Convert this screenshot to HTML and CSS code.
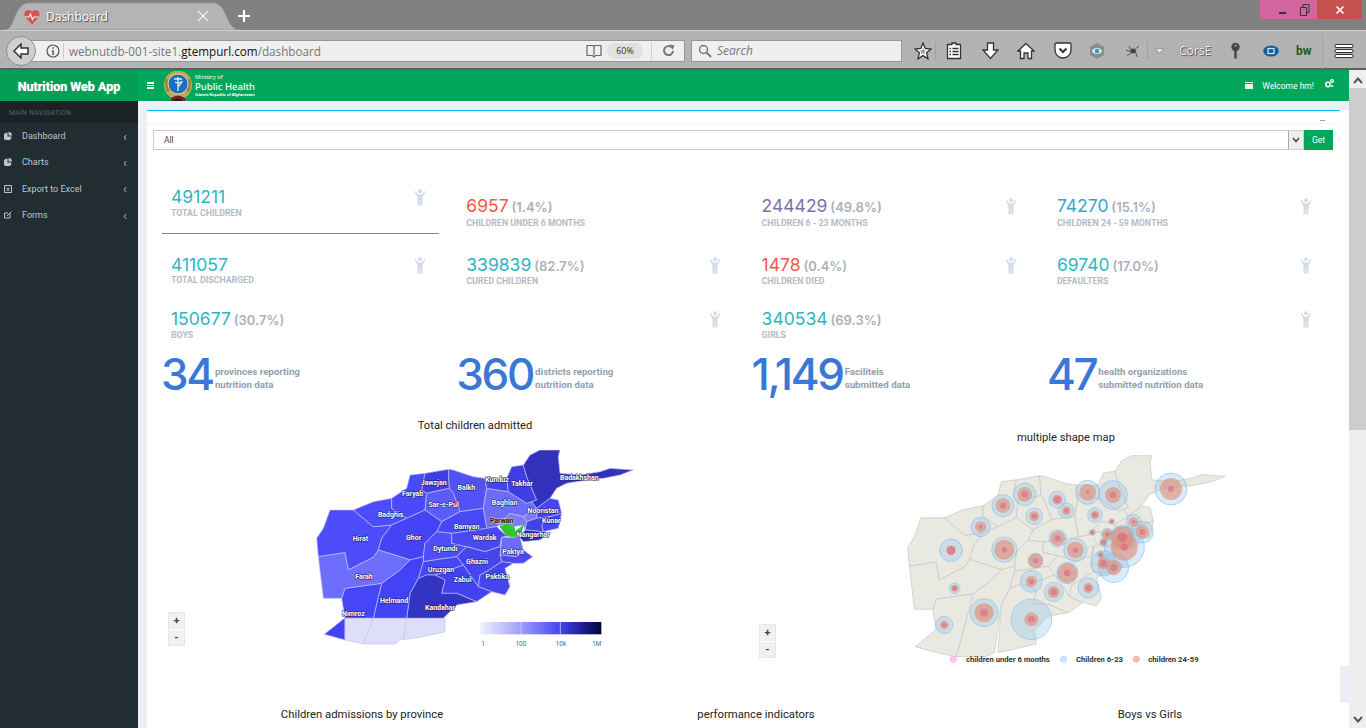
FILE: index.html
```html
<!DOCTYPE html>
<html lang="en">
<head>
<meta charset="utf-8">
<title>Dashboard</title>
<link rel="stylesheet" href="styles.css">
</head>
<body>
<div class="window">
  <div class="tabstrip">
    <div class="tab">
      <svg class="tab-shape" width="236" height="28" viewBox="0 0 236 28"><path d="M0 28C10 28 9 1 24 1H208C223 1 220 28 235 28Z" fill="#b4b4b4" stroke="#9a9a9a"/></svg>
      <svg class="tab-fav" width="16" height="16" viewBox="0 0 16 16"><path d="M8 15.5L1.2 8.2C-.6 5.6.4 1.4 4 1c1.800-.2 3.200.6 4 2 .8-1.400 2.200-2.200 4-2 3.600.4 4.600 4.600 2.800 7.200Z" fill="#d9534f"/><path d="M1 8H5L6.500 5 8.500 10.500 10 8H15" fill="none" stroke="#eee" stroke-width="1.200"/></svg>
      <span class="tab-title">Dashboard</span>
      <svg class="tab-close" width="12" height="12" viewBox="0 0 12 12"><path d="M1 1L11 11M11 1L1 11" stroke="#eee" stroke-width="1.200"/></svg>
    </div>
    <svg class="newtab" width="14" height="14" viewBox="0 0 14 14"><path d="M7 1V13M1 7H13" stroke="#fff" stroke-width="2.200"/></svg>
    <div class="winctl">
      <div class="winbtns">
        <svg width="14" height="14" viewBox="0 0 14 14"><path d="M1 10H8" stroke="#333" stroke-width="2"/></svg>
        <svg width="14" height="14" viewBox="0 0 14 14"><path d="M2.500 4.500H8.500V12.500H2.500ZM5 4V1.500H11V9.500H9" fill="none" stroke="#333"/></svg>
      </div>
      <div class="winclose">
        <svg width="10" height="10" viewBox="0 0 10 10"><path d="M1.500 1.500L8.500 8.500M8.500 1.500L1.500 8.500" stroke="#fff" stroke-width="1.600"/></svg>
      </div>
    </div>
  </div>
  <div class="toolbar">
    <div class="back">
      <svg width="18" height="16" viewBox="0 0 18 16"><path d="M9 1L2 8 9 15V11H16V5H9Z" fill="#fff" stroke="#333" stroke-width="1.500"/></svg>
    </div>
    <div class="urlbar">
      <svg class="url-info" width="14" height="14" viewBox="0 0 14 14"><circle cx="7" cy="7" r="6" fill="none" stroke="#555" stroke-width="1.200"/><path d="M7 6V11M7 3.200V4.800" stroke="#555" stroke-width="1.500"/></svg>
      <span class="url-text">webnutdb-001-site1.<b>gtempurl.com</b>/dashboard</span>
      <svg class="url-book" width="16" height="14" viewBox="0 0 16 14"><path d="M1 1.500H7L8 2.500 9 1.500H15V11.500H9.500L8 13 6.500 11.500H1ZM8 2.500V11" fill="none" stroke="#666" stroke-width="1.200"/></svg>
      <span class="url-zoom">60%</span>
      <span class="url-sep"></span>
      <svg class="url-reload" width="14" height="14" viewBox="0 0 14 14"><path d="M11 7A4.500 4.500 0 1 1 9.500 3.200" fill="none" stroke="#777" stroke-width="2"/><path d="M8 .5L12.500 1.500 10.500 6Z" fill="#777"/></svg>
    </div>
    <div class="searchbar">
      <svg width="14" height="14" viewBox="0 0 14 14"><circle cx="5.500" cy="5.500" r="4" fill="none" stroke="#777" stroke-width="1.500"/><path d="M8.500 8.500L13 13" stroke="#777" stroke-width="2"/></svg>
      <span>Search</span>
    </div>
    <div class="tools">
      <svg class="t-star" width="18" height="18" viewBox="0 0 18 18"><path d="M9 1L11.200 6.500 17 7 12.600 10.800 14 16.800 9 13.600 4 16.800 5.400 10.800 1 7 6.800 6.500Z" fill="#fff" stroke="#333" stroke-width="1.300"/><path d="M9 6L10 8.300 12.300 8.500 10.500 10.100 11 12.500 9 11.200 7 12.500 7.500 10.100 5.700 8.500 8 8.300Z" fill="#999"/></svg>
      <span class="t-sep"></span>
      <svg class="t-list" width="16" height="18" viewBox="0 0 16 18"><path d="M6 2.500V1H10V2.500H14.500V16.500H1.500V2.500Z" fill="#fff" stroke="#333" stroke-width="1.300"/><path d="M3.500 6.500H5M6.500 6.500H12.500M3.500 9.500H5M6.500 9.500H12.500M3.500 12.500H5M6.500 12.500H12.500" stroke="#333" stroke-width="1.500"/></svg>
      <svg class="t-down" width="17" height="18" viewBox="0 0 17 18"><path d="M5.500 1H11.500V8H16L8.500 16.500 1 8H5.500Z" fill="#fff" stroke="#333" stroke-width="1.300"/></svg>
      <svg class="t-home" width="18" height="18" viewBox="0 0 18 18"><path d="M9 1.500L17 9H14.500V16.500H11V11H7V16.500H3.500V9H1Z" fill="#fff" stroke="#333" stroke-width="1.300"/></svg>
      <svg class="t-pocket" width="18" height="17" viewBox="0 0 18 17"><path d="M1 2.500Q1 1 2.500 1H15.500Q17 1 17 2.500V8A8 8 0 0 1 1 8Z" fill="#fff" stroke="#333" stroke-width="1.300"/><path d="M5.500 6.500L9 10 12.500 6.500" fill="none" stroke="#333" stroke-width="2"/></svg>
      <svg class="t-eye" width="14" height="16" viewBox="0 0 14 16"><path d="M7 0L14 4V12L7 16 0 12V4Z" fill="#8c8c8c"/><ellipse cx="7" cy="8" rx="5" ry="3" fill="#d8e4ea"/><circle cx="7" cy="8" r="2.200" fill="#2a9fd6"/></svg>
      <svg class="t-bug" width="16" height="14" viewBox="0 0 16 14"><path d="M2 12L14 2M1 6L7 8M12 13L10 6M4 2L7 7" stroke="#555" stroke-width="1"/><circle cx="8" cy="7" r="2.500" fill="#444"/></svg>
      <span class="t-sep t-sep-2"></span>
      <svg class="t-drop" width="9" height="6" viewBox="0 0 9 6"><path d="M.5.5H8.500L4.500 5.500Z" fill="#e6e6e6" stroke="#777" stroke-width=".6"/></svg>
      <span class="t-cors">CorsE</span>
      <svg class="t-key" width="9" height="18" viewBox="0 0 9 18"><circle cx="4.500" cy="5" r="4.200" fill="#444"/><circle cx="4.500" cy="3.500" r="1" fill="#bbb"/><path d="M4.500 8V16.500" stroke="#444" stroke-width="2.400"/></svg>
      <svg class="t-q" width="16" height="12" viewBox="0 0 16 12"><ellipse cx="8" cy="6" rx="7.800" ry="5.500" fill="#0d5f9e"/><rect x="5" y="3.500" width="6" height="5" fill="none" stroke="#cfe3ef" stroke-width="1.300"/></svg>
      <span class="t-bw">bw</span>
      <span class="t-sep t-sep-3"></span>
      <svg class="t-menu" width="20" height="16" viewBox="0 0 20 16"><path d="M2 1.500H18Q19 1.500 19 3 19 4.500 18 4.500H2Q1 4.500 1 3 1 1.500 2 1.500ZM2 6.500H18Q19 6.500 19 8 19 9.500 18 9.500H2Q1 9.500 1 8 1 6.500 2 6.500ZM2 11.500H18Q19 11.500 19 13 19 14.500 18 14.500H2Q1 14.500 1 13 1 11.500 2 11.500Z" fill="#fff" stroke="#333"/></svg>
    </div>
  </div>

  <div class="app">
    <div class="appcol">
      <header class="apphead">
        <div class="brand">Nutrition Web App</div>
        <div class="headbar">
          <span class="burger"><i></i><i></i><i></i></span>
          <svg class="emblem" width="28" height="30" viewBox="0 0 28 30">
            <ellipse cx="14" cy="14" rx="14" ry="14.500" fill="#c2a95a"/>
            <path d="M2 8Q0 14 3 21L6 20Q4 14 5 8ZM26 8Q28 14 25 21L22 20Q24 14 23 8Z" fill="#8d8740"/>
            <circle cx="14" cy="13" r="10" fill="#1a6fc0"/>
            <circle cx="14" cy="13" r="10" fill="none" stroke="#e6d9a0"/>
            <path d="M14 6V20M10 8H18M11 11Q14 13 17 11T14 16" fill="none" stroke="#e8f0f8" stroke-width="1.300"/>
            <path d="M7 27Q14 22 21 27V30H7Z" fill="#7a1f1f"/>
            <path d="M10 29Q14 26 18 29V30H10Z" fill="#1d1d1d"/>
          </svg>
          <div class="moph">
            <span class="moph-1">Ministry of</span>
            <span class="moph-2">Public Health</span>
            <span class="moph-3">Islamic Republic of Afghanistan</span>
          </div>
          <div class="headright">
            <svg width="8" height="7" viewBox="0 0 8 7"><path d="M0 0H8V7H0Z" fill="#e8f5ee"/><path d="M0 1.500H8" stroke="#00a65a"/></svg>
            <span class="welcome">Welcome hm!</span>
            <svg class="gears" width="9" height="9" viewBox="0 0 9 9"><circle cx="3" cy="5.500" r="2.200" fill="none" stroke="#fff" stroke-width="1.500"/><circle cx="7" cy="2" r="1.400" fill="none" stroke="#fff" stroke-width="1.200"/><circle cx="7.300" cy="7" r="1" fill="#fff"/></svg>
          </div>
        </div>
      </header>
      <div class="appbody">
        <nav class="sidebar">
          <div class="navhead">MAIN NAVIGATION</div>
          <a class="navitem">
            <svg width="8" height="8" viewBox="0 0 8 8"><path d="M3.500.5V4.500H7.500A4 4 0 1 1 3.500.5ZM4.500 0A3.500 3.500 0 0 1 8 3.500H4.500Z" fill="#b8c7ce"/></svg>
            <span>Dashboard</span><b>‹</b>
          </a>
          <a class="navitem">
            <svg width="8" height="8" viewBox="0 0 8 8"><path d="M3.500.5V4.500H7.500A4 4 0 1 1 3.500.5ZM4.500 0A3.500 3.500 0 0 1 8 3.500H4.500Z" fill="#b8c7ce"/></svg>
            <span>Charts</span><b>‹</b>
          </a>
          <a class="navitem">
            <svg width="8" height="8" viewBox="0 0 8 8"><path d="M.5.500H7.500V7.500H.5ZM2.500 2.500L5.500 6M5.500 2.500L2.500 6" fill="none" stroke="#b8c7ce"/></svg>
            <span>Export to Excel</span><b>‹</b>
          </a>
          <a class="navitem">
            <svg width="8" height="8" viewBox="0 0 8 8"><path d="M6 2V7H.5V2H4M3 5L7.500.5" fill="none" stroke="#b8c7ce"/></svg>
            <span>Forms</span><b>‹</b>
          </a>
        </nav>
        <main class="content">
          <div class="pale-block"></div>
          <section class="box">
            <div class="boxhead"><span class="collapse"></span></div>
            <div class="filter">
              <div class="select">
                <span>All</span>
                <span class="select-arrow"><svg width="8" height="6" viewBox="0 0 8 6"><path d="M1 1L4 4.500 7 1" fill="none" stroke="#444" stroke-width="1.500"/></svg></span>
              </div>
              <button class="getbtn">Get</button>
            </div>

            <div class="stats">
              <div class="stat stat-first">
                <div class="stat-main"><div class="num teal">491211</div><div class="lab">TOTAL CHILDREN</div></div>
                <svg class="person" width="12" height="17" viewBox="0 0 12 17"><circle cx="6" cy="2.300" r="2"/><path d="M.5 2.500L1.500 2 4.200 5.500H7.800L10.500 2 11.500 2.500 8.500 8V16.500H6.300V11.500H5.700V16.500H3.500V8Z"/></svg>
              </div>
              <div class="stat stat-low">
                <div class="stat-main"><div class="num red">6957 <em>(1.4%)</em></div><div class="lab">CHILDREN UNDER 6 MONTHS</div></div>
              </div>
              <div class="stat stat-low">
                <div class="stat-main"><div class="num purple">244429 <em>(49.8%)</em></div><div class="lab">CHILDREN 6 - 23 MONTHS</div></div>
                <svg class="person" width="12" height="17" viewBox="0 0 12 17"><circle cx="6" cy="2.300" r="2"/><path d="M.5 2.500L1.500 2 4.200 5.500H7.800L10.500 2 11.500 2.500 8.500 8V16.500H6.300V11.500H5.700V16.500H3.500V8Z"/></svg>
              </div>
              <div class="stat stat-low">
                <div class="stat-main"><div class="num blue">74270 <em>(15.1%)</em></div><div class="lab">CHILDREN 24 - 59 MONTHS</div></div>
                <svg class="person" width="12" height="17" viewBox="0 0 12 17"><circle cx="6" cy="2.300" r="2"/><path d="M.5 2.500L1.500 2 4.200 5.500H7.800L10.500 2 11.500 2.500 8.500 8V16.500H6.300V11.500H5.700V16.500H3.500V8Z"/></svg>
              </div>

              <div class="stat">
                <div class="stat-main"><div class="num teal">411057</div><div class="lab">TOTAL DISCHARGED</div></div>
                <svg class="person" width="12" height="17" viewBox="0 0 12 17"><circle cx="6" cy="2.300" r="2"/><path d="M.5 2.500L1.500 2 4.200 5.500H7.800L10.500 2 11.500 2.500 8.500 8V16.500H6.300V11.500H5.700V16.500H3.500V8Z"/></svg>
              </div>
              <div class="stat">
                <div class="stat-main"><div class="num teal">339839 <em>(82.7%)</em></div><div class="lab">CURED CHILDREN</div></div>
                <svg class="person" width="12" height="17" viewBox="0 0 12 17"><circle cx="6" cy="2.300" r="2"/><path d="M.5 2.500L1.500 2 4.200 5.500H7.800L10.500 2 11.500 2.500 8.500 8V16.500H6.300V11.500H5.700V16.500H3.500V8Z"/></svg>
              </div>
              <div class="stat">
                <div class="stat-main"><div class="num red">1478 <em>(0.4%)</em></div><div class="lab">CHILDREN DIED</div></div>
                <svg class="person" width="12" height="17" viewBox="0 0 12 17"><circle cx="6" cy="2.300" r="2"/><path d="M.5 2.500L1.500 2 4.200 5.500H7.800L10.500 2 11.500 2.500 8.500 8V16.500H6.300V11.500H5.700V16.500H3.500V8Z"/></svg>
              </div>
              <div class="stat">
                <div class="stat-main"><div class="num teal">69740 <em>(17.0%)</em></div><div class="lab">DEFAULTERS</div></div>
                <svg class="person" width="12" height="17" viewBox="0 0 12 17"><circle cx="6" cy="2.300" r="2"/><path d="M.5 2.500L1.500 2 4.200 5.500H7.800L10.500 2 11.500 2.500 8.500 8V16.500H6.300V11.500H5.700V16.500H3.500V8Z"/></svg>
              </div>

              <div class="stat stat-wide">
                <div class="stat-main"><div class="num teal">150677 <em>(30.7%)</em></div><div class="lab">BOYS</div></div>
                <svg class="person" width="12" height="17" viewBox="0 0 12 17"><circle cx="6" cy="2.300" r="2"/><path d="M.5 2.500L1.500 2 4.200 5.500H7.800L10.500 2 11.500 2.500 8.500 8V16.500H6.300V11.500H5.700V16.500H3.500V8Z"/></svg>
              </div>
              <div class="stat stat-wide">
                <div class="stat-main"><div class="num teal">340534 <em>(69.3%)</em></div><div class="lab">GIRLS</div></div>
                <svg class="person" width="12" height="17" viewBox="0 0 12 17"><circle cx="6" cy="2.300" r="2"/><path d="M.5 2.500L1.500 2 4.200 5.500H7.800L10.500 2 11.500 2.500 8.500 8V16.500H6.300V11.500H5.700V16.500H3.500V8Z"/></svg>
              </div>
            </div>

            <div class="bigs">
              <div class="big"><span class="bignum">34</span><span class="bigtext">provinces reporting<br>nutrition data</span></div>
              <div class="big"><span class="bignum">360</span><span class="bigtext">districts reporting<br>nutrition data</span></div>
              <div class="big"><span class="bignum">1,149</span><span class="bigtext">Faciliteis<br>submitted data</span></div>
              <div class="big"><span class="bignum">47</span><span class="bigtext">health organizations<br>submitted nutrition data</span></div>
            </div>

            <div class="maps">
              <div class="mappanel mappanel-left">
                <div class="maptitle">Total children admitted</div>
                <svg class="mapsvg" width="330" height="210" viewBox="0 0 990 630">
                  <defs>
                    <linearGradient id="scale" x1="0" x2="1" y1="0" y2="0">
                      <stop offset="0" stop-color="#f2f2fe"/><stop offset=".33" stop-color="#a0a0fb"/><stop offset=".66" stop-color="#4545f5"/><stop offset=".85" stop-color="#1c1c8c"/><stop offset="1" stop-color="#05053a"/>
                    </linearGradient>
                  </defs>
                  <g class="prov">
                    <polygon fill="#4c4cfa" points="60,180 130,180 160,205 190,230 245,225 215,265 205,300 190,322 115,360 105,308 25,320 20,265 40,235"/>
                    <polygon fill="#4c4cfa" points="130,180 190,155 245,145 245,175 290,205 245,225 190,230 160,205"/>
                    <polygon fill="#4a4af8" points="245,145 290,115 300,75 345,70 335,120 350,130 345,180 290,205 245,175"/>
                    <polygon fill="#3e3ee4" points="345,70 415,58 418,115 350,130 335,120"/>
                    <polygon fill="#5252f8" points="415,58 430,60 490,80 525,85 530,115 520,175 450,185 430,130 418,115"/>
                    <polygon fill="#5c5cfa" points="350,130 418,115 430,130 450,185 395,215 345,180"/>
                    <polygon fill="#6c6cfa" points="530,115 595,125 650,160 665,155 680,175 640,200 600,190 560,230 530,235 520,175"/>
                    <polygon fill="#4444f0" points="525,85 590,85 595,125 530,115"/>
                    <polygon fill="#3e3ee4" points="590,85 605,50 640,45 650,80 680,150 665,155 650,160 595,125"/>
                    <polygon fill="#3232bc" points="640,45 660,15 690,0 750,0 745,20 750,70 810,75 870,65 900,55 970,60 930,75 880,85 830,90 770,100 740,115 720,145 680,175 665,155 680,150 650,80"/>
                    <polygon fill="#4646f4" points="680,175 720,145 745,150 755,190 720,200 680,205"/>
                    <polygon fill="#4646f4" points="720,200 755,190 745,235 700,245 695,225"/>
                    <polygon fill="#7c7cfa" points="640,200 680,175 680,205 650,215"/>
                    <polygon fill="#4242e8" points="650,215 680,205 720,200 695,225 700,245 645,240"/>
                    <polygon fill="#7c7cfa" points="600,190 640,200 650,215 645,240 640,225 612,230 590,220 560,230"/>
                    <polygon fill="#6c6cfa" points="575,262 630,262 640,300 620,320 570,315"/>
                    <polygon fill="#2e2eb4" points="630,262 645,240 700,245 715,250 690,270 640,275"/>
                    <polygon fill="#4a4af4" points="570,315 620,320 640,300 668,320 640,340 610,340 575,335"/>
                    <polygon fill="#4848f6" points="395,215 450,185 520,175 530,235 500,240 425,250 380,245"/>
                    <polygon fill="#4444f6" points="215,265 245,225 290,205 345,180 395,215 380,245 345,280 340,320 300,330 270,320 205,300"/>
                    <polygon fill="#4e4efa" points="345,280 380,245 425,250 425,280 470,290 440,320 340,335 340,320"/>
                    <polygon fill="#4a4af4" points="425,250 500,240 530,235 560,230 590,258 575,262 570,290 525,305 470,290 425,280"/>
                    <polygon fill="#4646f0" points="440,320 470,290 525,305 570,290 575,262 570,315 575,335 530,365 510,375 505,410 460,345"/>
                    <polygon fill="#4646f0" points="575,335 610,340 585,355 600,410 585,435 545,425 505,410 510,375 530,365"/>
                    <polygon fill="#4242ee" points="375,375 460,345 505,410 545,425 500,455 440,430 395,430 405,390"/>
                    <polygon fill="#4646f6" points="340,335 440,320 460,345 375,375 350,375 325,385"/>
                    <polygon fill="#3434c4" points="350,375 375,375 405,390 395,430 440,430 500,455 440,465 400,505 290,505 300,430 325,385"/>
                    <polygon fill="#4242f6" points="215,400 270,360 300,330 340,320 340,335 325,385 300,430 290,505 190,505 205,440"/>
                    <polygon fill="#4646f8" points="95,445 105,415 215,400 205,440 190,505 105,505"/>
                    <polygon fill="#6e6efc" points="25,320 105,308 115,360 190,322 205,300 270,320 300,330 270,360 215,400 105,415 95,445 40,445"/>
                    <polygon fill="#4242f6" points="105,503 105,570 43,553"/>
                    <polygon fill="#dedefa" points="105,505 405,505 405,545 340,560 270,570 255,582 165,582 105,570"/>
                    <path fill="none" d="M190,505 160,582M290,505 280,570"/>
                    <polygon class="prov-green" points="570,230 590,220 612,230 615,245 640,225 630,262 590,258"/>
                  </g>
                  <g class="maplabels">
                    <text x="371" y="104">Jawzjan</text>
                    <text x="469" y="119">Balkh</text>
                    <text x="561" y="97">Kunduz</text>
                    <text x="636" y="107">Takhar</text>
                    <text x="808" y="90">Badakhshan</text>
                    <text x="308" y="138">Faryab</text>
                    <text x="401" y="171">Sar-e-Pul</text>
                    <text x="584" y="165">Baghlan</text>
                    <text x="242" y="201">Badghis</text>
                    <text x="699" y="188">Nooristan</text>
                    <text x="724" y="219">Kunar</text>
                    <text x="575" y="219" class="dark">Parwan</text>
                    <text x="470" y="237">Bamyan</text>
                    <text x="670" y="261">Nangarhar</text>
                    <text x="151" y="272">Hirat</text>
                    <text x="311" y="269">Ghor</text>
                    <text x="524" y="269">Wardak</text>
                    <text x="406" y="303">Dytundi</text>
                    <text x="609" y="312">Paktya</text>
                    <text x="501" y="341">Ghazni</text>
                    <text x="393" y="366">Uruzgan</text>
                    <text x="562" y="386">Paktika</text>
                    <text x="162" y="386">Farah</text>
                    <text x="458" y="395">Zabul</text>
                    <text x="252" y="458">Helmand</text>
                    <text x="390" y="479">Kandahar</text>
                    <text x="130" y="497">Nimroz</text>
                  </g>
                  <rect x="510" y="516" width="364" height="37" fill="url(#scale)"/>
                  <path d="M633 516V553M751 516V553" stroke="#dcdcfa" stroke-width="2"/>
                  <g class="scaletext">
                    <text x="519" y="587">1</text>
                    <text x="633" y="587">100</text>
                    <text x="753" y="587">10k</text>
                    <text x="860" y="587">1M</text>
                  </g>
                </svg>
                <div class="zoomctl"><span>+</span><span>-</span></div>
              </div>
              <div class="mappanel mappanel-right">
                <div class="maptitle">multiple shape map</div>
                <svg class="mapsvg mapsvg-right" width="350" height="220" viewBox="0 0 1050 660">
                  <g transform="translate(33 17) scale(1.003 1.036)" class="prov-plain">
                    <polygon points="60,180 130,180 160,205 190,230 245,225 215,265 205,300 190,322 115,360 105,308 25,320 20,265 40,235"/>
                    <polygon points="130,180 190,155 245,145 245,175 290,205 245,225 190,230 160,205"/>
                    <polygon points="245,145 290,115 300,75 345,70 335,120 350,130 345,180 290,205 245,175"/>
                    <polygon points="345,70 415,58 418,115 350,130 335,120"/>
                    <polygon points="415,58 430,60 490,80 525,85 530,115 520,175 450,185 430,130 418,115"/>
                    <polygon points="350,130 418,115 430,130 450,185 395,215 345,180"/>
                    <polygon points="530,115 595,125 650,160 665,155 680,175 640,200 600,190 560,230 530,235 520,175"/>
                    <polygon points="525,85 590,85 595,125 530,115"/>
                    <polygon points="590,85 605,50 640,45 650,80 680,150 665,155 650,160 595,125"/>
                    <polygon points="640,45 660,15 690,0 750,0 745,20 750,70 810,75 870,65 900,55 970,60 930,75 880,85 830,90 770,100 740,115 720,145 680,175 665,155 680,150 650,80"/>
                    <polygon points="680,175 720,145 745,150 755,190 720,200 680,205"/>
                    <polygon points="720,200 755,190 745,235 700,245 695,225"/>
                    <polygon points="640,200 680,175 680,205 650,215"/>
                    <polygon points="650,215 680,205 720,200 695,225 700,245 645,240"/>
                    <polygon points="600,190 640,200 650,215 645,240 640,225 612,230 590,220 560,230"/>
                    <polygon points="570,230 590,220 612,230 615,245 640,225 630,262 590,258"/>
                    <polygon points="575,262 630,262 640,300 620,320 570,315"/>
                    <polygon points="630,262 645,240 700,245 715,250 690,270 640,275"/>
                    <polygon points="570,315 620,320 640,300 668,320 640,340 610,340 575,335"/>
                    <polygon points="395,215 450,185 520,175 530,235 500,240 425,250 380,245"/>
                    <polygon points="215,265 245,225 290,205 345,180 395,215 380,245 345,280 340,320 300,330 270,320 205,300"/>
                    <polygon points="345,280 380,245 425,250 425,280 470,290 440,320 340,335 340,320"/>
                    <polygon points="425,250 500,240 530,235 560,230 590,258 575,262 570,290 525,305 470,290 425,280"/>
                    <polygon points="440,320 470,290 525,305 570,290 575,262 570,315 575,335 530,365 510,375 505,410 460,345"/>
                    <polygon points="575,335 610,340 585,355 600,410 585,435 545,425 505,410 510,375 530,365"/>
                    <polygon points="375,375 460,345 505,410 545,425 500,455 440,430 395,430 405,390"/>
                    <polygon points="340,335 440,320 460,345 375,375 350,375 325,385"/>
                    <polygon points="350,375 375,375 405,390 395,430 440,430 500,455 440,465 400,505 405,545 340,560 290,570 300,430 325,385"/>
                    <polygon points="215,400 270,360 300,330 340,320 340,335 325,385 300,430 280,570 255,582 165,582 205,440"/>
                    <polygon points="95,445 105,415 215,400 205,440 165,582 105,570 43,553 105,503"/>
                    <polygon points="25,320 105,308 115,360 190,322 205,300 270,320 300,330 270,360 215,400 105,415 95,445 40,445"/>
                  </g>
                  <g class="bub-blue">
                    <circle cx="843" cy="117" r="48"/><circle cx="669" cy="135" r="43"/><circle cx="593" cy="127" r="36"/><circle cx="404" cy="133" r="34"/><circle cx="339" cy="167" r="33"/><circle cx="502" cy="149" r="25"/><circle cx="529" cy="182" r="23"/><circle cx="433" cy="199" r="25"/><circle cx="615" cy="195" r="22"/><circle cx="272" cy="231" r="29"/><circle cx="183" cy="301" r="34"/><circle cx="343" cy="299" r="38"/><circle cx="503" cy="265" r="26"/><circle cx="556" cy="300" r="35"/><circle cx="437" cy="332" r="22"/><circle cx="532" cy="369" r="32"/><circle cx="424" cy="394" r="33"/><circle cx="491" cy="426" r="29"/><circle cx="595" cy="414" r="31"/><circle cx="194" cy="415" r="16"/><circle cx="282" cy="488" r="42"/><circle cx="424" cy="508" r="61"/><circle cx="163" cy="525" r="26"/><circle cx="731" cy="216" r="23"/><circle cx="757" cy="246" r="33"/><circle cx="665" cy="214" r="8"/><circle cx="607" cy="247" r="9"/><circle cx="652" cy="253" r="18"/><circle cx="640" cy="277" r="11"/><circle cx="697" cy="262" r="36"/><circle cx="703" cy="292" r="60"/><circle cx="632" cy="315" r="11"/><circle cx="640" cy="340" r="38"/><circle cx="671" cy="353" r="45"/>
                  </g>
                  <g class="bub-orange">
                    <circle cx="843" cy="117" r="33"/><circle cx="669" cy="135" r="24"/><circle cx="593" cy="127" r="25"/><circle cx="404" cy="133" r="22"/><circle cx="339" cy="167" r="22"/><circle cx="502" cy="149" r="15"/><circle cx="529" cy="182" r="13"/><circle cx="433" cy="199" r="15"/><circle cx="615" cy="195" r="13"/><circle cx="272" cy="231" r="17"/><circle cx="183" cy="301" r="14"/><circle cx="343" cy="299" r="30"/><circle cx="503" cy="265" r="22"/><circle cx="556" cy="300" r="25"/><circle cx="437" cy="332" r="22"/><circle cx="532" cy="369" r="30"/><circle cx="424" cy="394" r="17"/><circle cx="491" cy="426" r="18"/><circle cx="595" cy="414" r="15"/><circle cx="194" cy="415" r="10"/><circle cx="282" cy="488" r="29"/><circle cx="424" cy="508" r="21"/><circle cx="163" cy="525" r="13"/><circle cx="731" cy="216" r="14"/><circle cx="757" cy="246" r="20"/><circle cx="665" cy="214" r="7"/><circle cx="607" cy="247" r="8"/><circle cx="652" cy="253" r="16"/><circle cx="640" cy="277" r="10"/><circle cx="697" cy="262" r="33"/><circle cx="703" cy="292" r="40"/><circle cx="632" cy="315" r="8"/><circle cx="640" cy="340" r="18"/><circle cx="671" cy="353" r="23"/>
                  </g>
                  <g class="bub-pink">
                    <circle cx="843" cy="117" r="9"/><circle cx="669" cy="135" r="10"/><circle cx="593" cy="127" r="6"/><circle cx="404" cy="133" r="10"/><circle cx="339" cy="167" r="9"/><circle cx="502" cy="149" r="10"/><circle cx="529" cy="182" r="7"/><circle cx="433" cy="199" r="8"/><circle cx="615" cy="195" r="8"/><circle cx="272" cy="231" r="6"/><circle cx="183" cy="301" r="13"/><circle cx="343" cy="299" r="8"/><circle cx="503" cy="265" r="9"/><circle cx="556" cy="300" r="8"/><circle cx="437" cy="332" r="8"/><circle cx="532" cy="369" r="10"/><circle cx="424" cy="394" r="8"/><circle cx="491" cy="426" r="10"/><circle cx="595" cy="414" r="9"/><circle cx="194" cy="415" r="8"/><circle cx="282" cy="488" r="12"/><circle cx="424" cy="508" r="10"/><circle cx="163" cy="525" r="7"/><circle cx="731" cy="216" r="5"/><circle cx="757" cy="246" r="9"/><circle cx="665" cy="214" r="5"/><circle cx="607" cy="247" r="5"/><circle cx="652" cy="253" r="7"/><circle cx="640" cy="277" r="7"/><circle cx="697" cy="262" r="14"/><circle cx="703" cy="292" r="10"/><circle cx="632" cy="315" r="6"/><circle cx="640" cy="340" r="10"/><circle cx="671" cy="353" r="10"/>
                  </g>
                  <g class="legend">
                    <circle cx="190" cy="628" r="10" fill="#ffc4ee" stroke="#f6a8e0"/>
                    <text x="228" y="635">children under 6 months</text>
                    <circle cx="521" cy="628" r="10" fill="#cfe2f7" stroke="#a9cbee"/>
                    <text x="558" y="635">Children 6-23</text>
                    <circle cx="739" cy="628" r="10" fill="#ffb9a6" stroke="#f7a893"/>
                    <text x="775" y="635">children 24-59</text>
                  </g>
                </svg>
                <div class="zoomctl"><span>+</span><span>-</span></div>
              </div>
            </div>

            <div class="charttitles">
              <div>Children admissions by province</div>
              <div>performance indicators</div>
              <div>Boys vs Girls</div>
            </div>
          </section>
        </main>
      </div>
    </div>
    <div class="scrollbar">
      <svg class="sb-up" width="10" height="7" viewBox="0 0 10 7"><path d="M1 6L5 1.500 9 6" fill="none" stroke="#555" stroke-width="2"/></svg>
      <div class="sb-thumb"></div>
      <svg class="sb-down" width="10" height="7" viewBox="0 0 10 7"><path d="M1 1L5 5.500 9 1" fill="none" stroke="#555" stroke-width="2"/></svg>
    </div>
  </div>
</div>
</body>
</html>
```
FILE: styles.css
```css
* { box-sizing: border-box; }
html, body { margin: 0; padding: 0; height: 728px; overflow: hidden; background: #fff; }
body { font-family: Roboto, "Liberation Sans", sans-serif; }
.window { width: 1366px; height: 728px; display: flex; flex-direction: column; overflow: hidden; }

/* browser chrome */
.tabstrip { height: 30px; background: #808080; display: flex; align-items: flex-start; position: relative; flex: none; }
.tab { position: relative; width: 236px; height: 28px; margin: 2px 0 0 5px; display: flex; align-items: center; padding: 0 0 0 19px; flex: none; }
.tab-shape { position: absolute; left: 0; top: 0; }
.tab-fav { position: relative; margin-top: 1px; }
.tab-title { position: relative; margin-left: 6px; font: 12px "Open Sans", sans-serif; color: #fff; text-shadow: 1px 1px 1px #444; width: 151px; }
.tab-close { position: relative; }
.newtab { margin: 9px 0 0 -4px; }
.winctl { margin-left: auto; margin-right: 4px; display: flex; height: 19px; width: 102px; border-radius: 0 0 3px 3px; overflow: hidden; }
.winbtns { width: 57px; background: #d4649f; display: flex; justify-content: flex-end; align-items: center; gap: 6px; padding-right: 5px; }
.winclose { width: 45px; background: #c75050; display: flex; align-items: center; justify-content: center; }

.toolbar { height: 40px; background: #b3b3b3; border-top: 1px solid #d0d0d0; border-bottom: 2px solid #5e5e5e; padding-top: 2px; display: flex; align-items: center; position: relative; flex: none; padding-left: 6px; }
.back { width: 30px; height: 30px; border-radius: 50%; background: #cfcfcf; border: 1px solid #8e8e8e; display: flex; align-items: center; justify-content: center; position: relative; z-index: 1; flex: none; }
.urlbar { width: 657px; height: 22px; margin-left: -8px; background: #efefef; border: 1px solid #969696; border-radius: 0 2px 2px 0; display: flex; align-items: center; padding-left: 22px; flex: none; }
.url-info { flex: none; margin-left: -5px; }
.url-text { margin-left: 3px; padding-left: 5px; border-left: 1px solid #ccc; font: 11.700px "Open Sans", sans-serif; color: #777; width: 523px; white-space: nowrap; line-height: 16px; }
.url-text b { font-weight: 400; color: #111; }
.url-book { flex: none; margin-left: 0; }
.url-zoom { margin-left: 5px; width: 36px; height: 16px; background: #e1e1e1; border-radius: 8px; font: 9px/16px "Open Sans", sans-serif; color: #333; text-align: center; flex: none; }
.url-sep { width: 1px; height: 18px; background: #d0d0d0; margin-left: 8px; flex: none; }
.url-reload { margin-left: 10px; flex: none; }
.searchbar { width: 211px; height: 22px; margin-left: 6px; background: #efefef; border: 1px solid #969696; display: flex; align-items: center; padding-left: 6px; gap: 5px; font: italic 12px "Open Sans", sans-serif; color: #777; flex: none; }
.tools { display: flex; align-items: center; height: 100%; flex: 1; position: relative; }
.t-star { margin-left: 12px; }
.t-sep { width: 1px; height: 18px; background: #a0a0a0; margin-left: 3px; }
.t-list { margin-left: 10px; }
.t-down { margin-left: 20px; }
.t-home { margin-left: 18px; }
.t-pocket { margin-left: 19px; }
.t-eye { margin-left: 18px; }
.t-bug { margin-left: 21px; }
.t-sep-2 { margin-left: 6px; }
.t-drop { margin-left: 7px; }
.t-cors { margin-left: 15px; font: 12px "Open Sans", sans-serif; color: #fff; text-shadow: 0 0 1px #333, 1px 1px 1px #555; }
.t-key { margin-left: 20px; }
.t-q { margin-left: 23px; }
.t-bw { margin-left: 17px; font: 700 12px Roboto, sans-serif; color: #1f5c12; }
.t-sep-3 { margin-left: 10px; height: 36px; background: #a8a8a8; }
.t-menu { margin-left: 11px; }

/* app */
.app { flex: 1; display: flex; min-height: 0; }
.appcol { width: 1349px; display: flex; flex-direction: column; }
.apphead { height: 31px; display: flex; flex: none; }
.brand { width: 138px; background: #049e55; color: #fff; font: 700 12.500px/33px Roboto, sans-serif; text-align: center; text-shadow: 0 0 1px #ddd; }
.headbar { flex: 1; background: #00a65a; display: flex; align-items: center; padding-left: 9px; color: #fff; }
.burger { display: flex; flex-direction: column; gap: 1px; width: 7px; margin-right: 10px; }
.burger i { height: 1.500px; background: #fff; display: block; }
.emblem { flex: none; }
.moph { display: flex; flex-direction: column; margin-left: 3px; line-height: 1; white-space: nowrap; }
.moph-1 { font: 5.500px/7px "Noto Sans", sans-serif; }
.moph-2 { font: 500 9.500px/11px "Noto Sans", sans-serif; }
.moph-3 { font: 700 3.800px/6px "Noto Sans", sans-serif; }
.headright { margin-left: auto; display: flex; align-items: center; padding-right: 15px; }
.welcome { font: 8.500px Roboto, sans-serif; margin: 0 11px 0 9px; }
.gears { margin-top: -4px; }

.appbody { flex: 1; display: flex; min-height: 0; }
.sidebar { width: 138px; background: #222d32; flex: none; }
.navhead { height: 22px; background: #1a2226; color: #4b646f; font: 7px/24px Roboto, sans-serif; padding-left: 9px; letter-spacing: .15px; }
.navitem { display: flex; align-items: center; height: 26.300px; padding-left: 4px; color: #b8c7ce; font-size: 9px; }
.navitem svg { flex: none; }
.navitem span { margin-left: 10px; width: 101px; }
.navitem b { font-weight: 400; font-size: 13px; color: #9fb4bd; }

.content { flex: 1; background: #fff; border-left: 9px solid #ecf0f5; position: relative; min-width: 0; overflow: hidden; padding-top: 9px; box-shadow: inset 0 9px 0 #ecf0f5; }
.pale-block { position: absolute; left: 1193px; top: 565px; width: 9px; height: 37px; background: #ebeff5; }
.box { width: 1193px; border-top: 1px solid #00c0ef; background: #fff; height: 700px; }
.boxhead { height: 13px; border-bottom: 1px solid #f4f4f4; position: relative; }
.collapse { position: absolute; right: 15px; top: 9px; width: 5px; height: 1px; background: #97a0b3; }
.filter { display: flex; margin: 6px 7px 0 6px; height: 20px; }
.select { flex: 1; border: 1px solid #c9ccd4; display: flex; align-items: center; justify-content: space-between; padding-left: 10px; font-size: 8.500px; color: #444; }
.select-arrow { width: 15px; height: 18px; background: #efefef; border-left: 1px solid #aaa; display: flex; align-items: center; justify-content: center; }
.getbtn { width: 29px; height: 20px; background: #00a65a; border: 0; color: #fff; font: 8.500px Roboto, sans-serif; padding: 0; }

.stats { display: grid; grid-template-columns: repeat(4, 295.300px); grid-template-rows: 68px 54px 44px; margin: 37px 0 0 15px; }
.stat { display: flex; padding-left: 9px; width: 277px; position: relative; align-items: flex-start; }
.stat-first { border-bottom: 1px solid #888; height: 47px; }
.stat-low { padding-top: 9px; }
.stat-first .lab, .stat-low .lab { margin-top: 1px; }
.stat-wide { grid-column: span 2; width: 572px; }
.stat-main { flex: none; width: 243px; }
.stat-wide .stat-main { width: 538px; }
.person { fill: #d3dbe6; margin-top: 2px; flex: none; }
.num { font: 17.500px/20px Inter, Roboto, sans-serif; white-space: nowrap; word-spacing: -2px; }
.num em { font-style: normal; color: #aab2bd; font-size: 13px; font-weight: 600; }
.teal { color: #2eb5c4; }
.red { color: #f4574c; }
.purple { color: #7e6fae; }
.blue { color: #35a7c9; }
.lab { font-size: 8.800px; font-weight: 700; color: #b3bcc6; line-height: 11px; white-space: nowrap; }

.bigs { display: grid; grid-template-columns: repeat(4, 295.300px); margin: 1px 0 0 14px; height: 40px; }
.big { display: flex; align-items: center; }
.bignum { font: 500 44px/40px Inter, Roboto, sans-serif; color: #3a78d8; letter-spacing: -2.300px; }
.bigtext { font-size: 9.700px; font-weight: 700; color: #93a0b0; line-height: 13px; margin-left: 2px; padding-top: 8px; }

.maps { display: flex; margin: 25px 0 0 6px; }
.mappanel { position: relative; height: 283px; flex: none; }
.mappanel-left { width: 644px; }
.mappanel-right { width: 538px; padding-top: 12px; }
.maptitle { font-size: 11.200px; color: #222; line-height: 14px; text-align: center; }
.mapsvg { display: block; margin: 17px 0 0 157px; }
.mapsvg-right { margin: 5px 0 0 93px; }
.prov polygon, .prov path { stroke: #bfbff2; stroke-width: 2; }
.prov .prov-green { fill: #33c433; stroke: #33c433; }
.prov-plain polygon { fill: #e9e9e1; stroke: #c6c6c0; stroke-width: 2; }
.maplabels text { font: 700 21px Roboto, sans-serif; fill: #fff; stroke: #22226a; stroke-width: 3px; paint-order: stroke; text-anchor: middle; }
.maplabels .dark { fill: #111; stroke: #e8c9a8; }
.scaletext text { font: 20px Roboto, sans-serif; fill: #55707e; text-anchor: middle; }
.bub-blue circle { fill: #8cc1ee; fill-opacity: .32; stroke: #8cc1ee; stroke-width: 2; }
.bub-orange circle { fill: #e38a70; fill-opacity: .6; }
.bub-pink circle { fill: #df4d80; fill-opacity: .45; }
.legend text { font: 700 23px Roboto, sans-serif; fill: #333; }
.zoomctl { position: absolute; left: 15px; top: 193px; width: 17px; display: flex; flex-direction: column; background: #f1f1f1; border: 1px solid #e6e6e6; }
.mappanel-right .zoomctl { left: -38px; top: 205px; }
.zoomctl span { height: 16px; text-align: center; font: 700 11px/15px Roboto, sans-serif; color: #444; }
.zoomctl span + span { border-top: 1px solid #fff; }

.charttitles { display: grid; grid-template-columns: repeat(3, 394px); margin: 6px 0 0 18px; font-size: 11.300px; line-height: 14px; color: #222; text-align: center; }

.scrollbar { width: 17px; background: #efefef; display: flex; flex-direction: column; align-items: center; position: relative; }
.sb-up { margin-top: 7px; }
.sb-thumb { width: 17px; height: 342px; background: #cdcdcd; margin-top: 4px; }
.sb-down { margin-top: auto; margin-bottom: 5px; }
```
